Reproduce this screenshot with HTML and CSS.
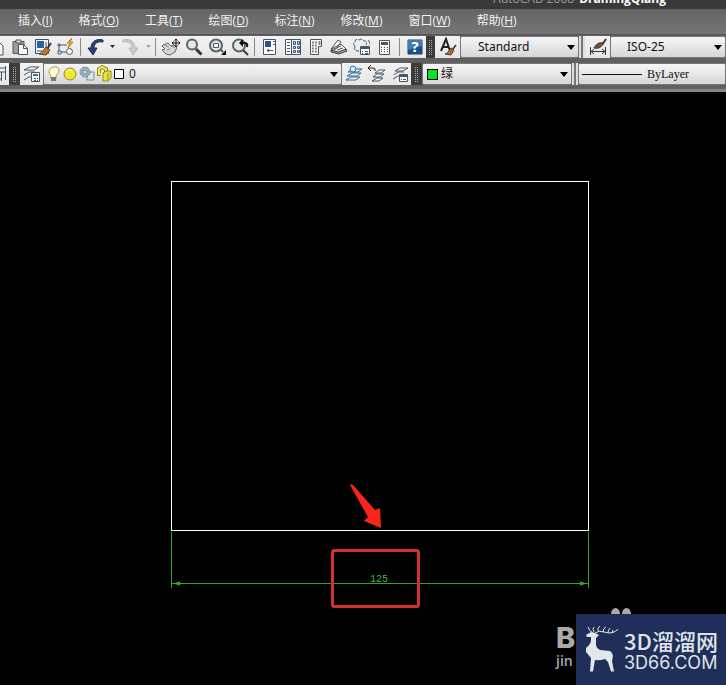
FILE: index.html
```html
<!DOCTYPE html>
<html lang="zh-CN">
<head>
<meta charset="utf-8">
<title>AutoCAD</title>
<link rel="stylesheet" href="styles.css">
</head>
<body>
<header class="titlebar"><span>AutoCAD 2008</span> <b>DramingQiang</b></header>
<nav class="menubar">
  <button>插入(<u>I</u>)</button>
  <button>格式(<u>O</u>)</button>
  <button>工具(<u>T</u>)</button>
  <button>绘图(<u>D</u>)</button>
  <button>标注(<u>N</u>)</button>
  <button>修改(<u>M</u>)</button>
  <button>窗口(<u>W</u>)</button>
  <button>帮助(<u>H</u>)</button>
</nav>

<div class="toolbars">
  <div class="row">
    <div class="tools tools-cut">
      <button aria-label="复制"><svg viewBox="0 0 20 20"><path class="pg" d="M7 5h5l4 4v9H7z"/></svg></button>
      <button aria-label="粘贴"><svg viewBox="0 0 20 20"><path d="M3 4.500h11v12H3z" fill="#9c9c98" stroke="#555"/><path d="M6 3h5v3H6z" fill="#ddd" stroke="#555"/><path class="pg" d="M8.500 7.500h5l4 4v6h-9z"/><path class="ln" d="M13.500 7.500v4h4"/></svg></button>
      <button aria-label="特性匹配"><svg viewBox="0 0 20 20"><path d="M2.500 2.500h13v14h-13z" fill="#f4f7fa" stroke="#345474"/><path d="M4 4h7v7H4z" fill="#2b6299"/><path d="M13 5v5M4 14h5" stroke="#345474"/><path d="M18 6l-4 6" stroke="#334" stroke-width="2"/><path d="M13 10l4 3-4 5-7-1c3-1 4-4 7-7z" fill="#b67837" stroke="#714316"/></svg></button>
      <button aria-label="块编辑器"><svg viewBox="0 0 20 20"><path class="ln" d="M3 15V8h8M5 15h7"/><path class="pg" d="M2 14h3v3H2zM2 7h2v2H2z"/><circle class="pg" cx="13.500" cy="14.500" r="3"/><path d="M16 1l-5 5h3l-2 5 5-6h-3z" fill="#ffc54a" stroke="#be7917"/></svg></button>
      <i class="sep"></i>
      <button aria-label="放弃"><svg viewBox="0 0 20 20"><path d="M17 3C10 1 5 5 5 11H2l5 7 4-7H8c0-4 3-7 9-6z" fill="#23456f" stroke="#142d50"/></svg></button>
      <button class="drop" aria-label="放弃列表"><svg viewBox="0 0 11 20"><path d="M3 8h5L5.500 11z" fill="#122c5c"/></svg></button>
      <button aria-label="重做"><svg viewBox="0 0 20 20"><path d="M3 3c7-2 12 2 12 8h3l-5 7-4-7h3c0-4-3-7-9-6z" fill="#ccc" stroke="#b5b5b5"/></svg></button>
      <button class="drop" aria-label="重做列表"><svg viewBox="0 0 11 20"><path d="M5 8h5L7.500 11z" fill="#aaa"/></svg></button>
      <i class="sep"></i>
      <button aria-label="平移"><svg viewBox="0 0 20 20"><path d="M2 8l5-2 3 3 3-1 3 2-2 5-5 3-4-1-4-4 3-1-3-3z" fill="#d8d8d6" stroke="#666"/><path d="M3 8l5 2M6 13l3-1M10 9l4 2" stroke="#888" fill="none"/><path d="M15 2v8M11 6h8M13.500 3.500L15 2l1.500 1.500M13.500 8.500L15 10l1.500-1.500M12.500 4.500L11 6l1.500 1.500M17.500 4.500L19 6l-1.500 1.500" stroke="#111" fill="none"/></svg></button>
      <button aria-label="实时缩放"><svg viewBox="0 0 20 20"><path d="M12 12l5.500 5.500" stroke="#30383c" stroke-width="3"/><circle class="lens" cx="8" cy="7.500" r="5"/></svg></button>
      <button aria-label="窗口缩放"><svg viewBox="0 0 20 20"><path d="M13 12l3 3" stroke="#555" stroke-width="2"/><circle class="lens" cx="9" cy="8.500" r="6"/><path class="pg" d="M6.500 6.500h5v4h-5z"/><path d="M19 13v5h-5z" fill="#111"/></svg></button>
      <button aria-label="缩放上一个"><svg viewBox="0 0 20 20"><path d="M13 13l5 5" stroke="#30383c" stroke-width="2"/><circle class="lens" cx="9" cy="8.500" r="6"/><path d="M11 6h4q3 0 2 4" fill="none" stroke="#111" stroke-width="2"/><path d="M13 2v8L9 6z" fill="#111"/></svg></button>
      <i class="sep"></i>
      <button aria-label="特性"><svg viewBox="0 0 20 20"><path class="pg" d="M3.500 2.500h12v15h-12z"/><path d="M5 4h6v6H5z" fill="#225588"/><path class="ln" d="M13 4.500h2M13 7.500h2M7 13.500h6M9 12l-2 1.500L9 15"/></svg></button>
      <button aria-label="设计中心"><svg viewBox="0 0 20 20"><path class="pg" d="M2.500 2.500h15v15h-15zM8.500 3v14"/><path d="M10.500 4.500h2v3h-2zM14.500 4.500h2v3h-2zM10.500 9.500h2v2h-2zM14.500 9.500h2v2h-2zM10.500 13.500h2v2h-2zM14.500 13.500h2v2h-2z" fill="#cbd7e2" stroke="#36577a"/><path class="ln" d="M4 5.500h3M4 8.500h3M4 11.500h3M4 14.500h3"/></svg></button>
      <button aria-label="工具选项板"><svg viewBox="0 0 20 20"><path class="pg" d="M4.500 2.500h11v7h-3v8h-8z"/><path d="M6 5.500h2m1 0h2M6 8.500h2m1 0h2M6 11.500h2m1 0h2M6 14.500h2m1 0h2M13.500 4v4" stroke="#888" stroke-width="2"/></svg></button>
      <button aria-label="图纸集"><svg viewBox="0 0 20 20"><path class="pg" d="M2 12l7-9 3 2-5 7zM2 12l10-5 6 6-9 3z"/><path d="M2 13l7 2 8-3 1 2-8 3-8-2z" fill="#999" stroke="#444"/><path class="ln" d="M5 12l7-3M8 13l6-2"/></svg></button>
      <button aria-label="标记集"><svg viewBox="0 0 20 20"><path class="ln" stroke-dasharray="4 1" d="M3 9q-3-2 0-4 0-4 4-2 3-2 5 1 4 0 2 4M3 9q-2 5 4 5M16 3q3 3 1 5"/><path class="pg" d="M8.500 9.500h9v8h-9z"/><path d="M9 10h8v2H9z" fill="#3a5874"/><path class="ln" d="M10 14.500h1m2 0h3M10 16.500h1m2 0h3"/></svg></button>
      <button aria-label="快速计算器"><svg viewBox="0 0 20 20"><path class="pg" d="M4.500 3.500h10v14h-10z"/><path d="M6 5h7v3H6z" fill="#555"/><path d="M6 10.500h7M6 12.500h7M6 14.500h7" stroke="#444" stroke-dasharray="1 2"/></svg></button>
      <i class="sep"></i>
      <button aria-label="帮助"><svg viewBox="0 0 20 20"><path d="M3 3h14v14H3z" fill="#1c5387" stroke="#164068"/><path d="M3 3h14v6L3 13z" fill="#437aa9"/><text x="10" y="15" class="help">?</text></svg></button>
    </div>
    <i class="grip"></i>
    <div class="tools">
      <button class="wide" aria-label="文字样式"><svg viewBox="0 0 20 20"><path d="M3 14L8 2l4 12M5 10h6" fill="none" stroke="#222" stroke-width="2"/><path d="M18 8l-4 5" stroke="#644125" stroke-width="2"/><path d="M13 11l3 2-3 5-6-1c3-1 4-3 6-6z" fill="#a47043" stroke="#62391b"/></svg></button>
    </div>
    <label class="combo combo-style"><select aria-label="文字样式名"><option>Standard</option></select></label>
    <i class="split"></i>
    <div class="tools">
      <button class="wide" aria-label="标注样式"><svg viewBox="0 0 20 20"><path d="M2.500 10v8M17.500 10v8M3 14.500h14M6 12l-3 2.500L6 17M14 12l3 2.500-3 2.500" fill="none" stroke="#333"/><path d="M18 2l-4 6" stroke="#4d3425" stroke-width="2"/><path d="M6 11c2-4 5-6 9-5-1 4-4 6-9 5z" fill="#75523a" stroke="#49301f"/></svg></button>
    </div>
    <label class="combo combo-fill combo-dim"><select aria-label="标注样式名"><option>ISO-25</option></select></label>
  </div>

  <div class="row">
    <div class="tools tools-edge">
      <button aria-label="标注更新"><svg viewBox="0 0 20 20"><path class="ln" d="M10 4h8M17.500 2v14M12 8h6M13.500 8v9M10 15h4"/></svg></button>
    </div>
    <i class="grip grip-wide"></i>
    <div class="tools">
      <button aria-label="图层特性管理器"><svg viewBox="0 0 20 20"><path class="pg" d="M2 6l6-3h9l-5 3zM2 11l5-3h6M2 16l5-3h3"/><path class="pg" d="M9.500 8.500h8v9h-8z"/><path d="M11 10h5v2h-5z" fill="#3b7199"/><path d="M12 14.500h4M12 16.500h4" stroke="#255a85" stroke-dasharray="2 1"/></svg></button>
    </div>
    <label class="combo combo-layer">
      <svg class="states" viewBox="0 0 80 20" aria-hidden="true">
        <path d="M6 12q-4-5 0-8 5-3 8 1 1 3-3 7v3H6z" fill="#fffbd2" stroke="#a69a5b"/><path d="M6 13h5v4H6z" fill="#777"/>
        <circle cx="25" cy="10" r="6" fill="#eee733" stroke="#8c891e"/><path d="M21 8q2-3 6-2" stroke="#fffcc0" fill="none"/>
        <path d="M42 8h7v8h-7z" fill="#dce5ea" stroke="#758f9c"/><circle cx="40" cy="8" r="5" fill="#9ab5c2" stroke="#6b8795" stroke-dasharray="3 1"/><circle cx="40" cy="8" r="2" fill="#dde7eb" stroke="#6b8795"/>
        <path d="M56 10H54V5l3-2 4 2v5" fill="none" stroke="#938d17" stroke-width="4"/><path d="M56 10H54V5l3-2 4 2v5" fill="none" stroke="#eee957" stroke-width="2"/><path d="M58 9l3-2h5v7l-3 3h-5z" fill="#ece632" stroke="#8d881a"/><path d="M63 9v7" stroke="#8d881a"/>
        <path d="M69.500 5.500h9v9h-9z" fill="#fff" stroke="#000"/>
      </svg>
      <select aria-label="图层"><option>0</option></select>
    </label>
    <div class="tools">
      <button aria-label="将对象的图层置为当前"><svg viewBox="0 0 20 20"><path d="M2 16l5-3h9l-4 3zM3 12l5-3h9l-4 3zM4 8l5-3h9l-4 3z" fill="#edf7fc" stroke="#326589"/><circle cx="9" cy="5" r="3" fill="#c9edf5" stroke="#347199"/></svg></button>
      <button aria-label="上一个图层"><svg viewBox="0 0 20 20"><path class="pg" d="M5 17l5-3h6l-4 3zM6 13l4-3h7l-4 3zM8 9l4-3h6l-4 3z"/><path d="M1 4h5q3 0 2 3M4 1L1 4l3 3" fill="none" stroke="#222"/></svg></button>
      <button aria-label="图层状态管理器"><svg viewBox="0 0 20 20"><path class="pg" d="M3 15l5-3h4M4 11l4-3h6M5 7l5-3h8l-5 3zM9.500 10.500h8v7h-8z"/><path d="M10 11h7v2h-7z" fill="#3a5874"/><path class="ln" d="M11 15.500h1m1 0h3"/></svg></button>
    </div>
    <i class="grip grip-wide"></i>
    <label class="combo combo-color"><i class="swatch"></i><select aria-label="颜色"><option>绿</option></select></label>
    <i class="split"></i>
    <label class="combo combo-fill combo-line"><i class="stroke"></i><select aria-label="线型"><option>ByLayer</option></select></label>
  </div>
</div>

<main class="canvas">
  <svg class="drawing" viewBox="0 0 726 590" role="img" aria-label="矩形与尺寸标注">
    <rect x="171.500" y="89.500" width="417" height="349" fill="none" stroke="#fff"/>
    <g stroke="#31a331" fill="#31b331">
      <path d="M171.500 440v56M588.500 440v56M172 491.500h416"/>
      <path d="M173 491.500l7-2v4zM587 491.500l-7-2v4z" stroke="none"/>
    </g>
    <text x="379" y="490" class="dim">125</text>
    <path d="M350 393q1-2 4 1l21 24 5-2 1 20-17-7 4-4z" fill="#fb2419"/>
    <rect x="332.500" y="458.500" width="86" height="56" rx="2" fill="none" stroke="#d3312c" stroke-width="3"/>
  </svg>
  <div class="source"><i class="paw"></i><i class="paw"></i><b>B</b><span>jin</span></div>
  <div class="brand">
    <svg class="deer" viewBox="0 0 36 48" aria-hidden="true">
      <path d="M1 9l5-3 4 1 4 2-3 3v4q-1 5 4 8l10 1q3 2 3 5l-1 5 2 10.500h-3L23 36l-3-3q-6 2-10 1L8 45.500H5L6 32 1 26v-4q5-4 5-8V11L2 11z" fill="#e4e6ea"/>
      <path d="M8 7Q4 5 3 1M9 6Q7 3 9 1M10 7q4-3 9-1 9 3 14-3M13 5q-1-3 2-5M18 6q0-4 3-5M23 7q0-3 2-5M27 7l1-3" fill="none" stroke="#e4e6ea"/>
    </svg>
    <div class="names"><strong>3D溜溜网</strong><span>3D66.COM</span></div>
  </div>
</main>
</body>
</html>
```
FILE: styles.css
```css
* { box-sizing: border-box; }
body {
  margin: 0;
  min-height: 100vh;
  display: flex;
  flex-direction: column;
  overflow-x: hidden;
  background: #000;
  font: 12px/16px "Open Sans", "Noto Sans CJK SC", sans-serif;
}
button, select { font: inherit; color: inherit; border: 0; background: none; padding: 0; }
svg { display: block; }

.titlebar {
  display: flex;
  align-items: flex-end;
  justify-content: flex-end;
  gap: 5px;
  height: 9px;
  padding: 0 60px 2px 0;
  overflow: hidden;
  background: #393939;
  color: #999;
  font-size: 12px;
  line-height: 16px;
}
.titlebar b { color: #fff; }

.menubar {
  display: flex;
  gap: 2px;
  height: 26px;
  padding: 0 6px 2px;
  background: linear-gradient(#646464, #767676);
  border-bottom: 1px solid #555;
  color: #f2f2f2;
}
.menubar button { padding: 0 12px; white-space: nowrap; }

.toolbars {
  display: flex;
  flex-direction: column;
  gap: 5px;
  padding: 1px 0 4px;
  background: #606060;
  border-bottom: 3px solid #858585;
}
.row { display: flex; height: 22px; }
.tools {
  display: flex;
  flex: none;
  align-items: center;
  background: linear-gradient(#f2f2f2, #e6e6e6);
}
.tools-cut { margin-left: -15px; }
.tools-edge { width: 9px; justify-content: flex-end; overflow: hidden; }
.tools button { flex: none; width: 23px; height: 22px; display: grid; place-items: center; }
.tools .drop { width: 11px; }
.tools .wide { width: 25px; }
.tools svg { height: 20px; }
.pg { fill: #f8fafb; stroke: #465564; }
.ln { fill: none; stroke: #465564; }
.lens { fill: #dfe7ea; stroke: #59656b; stroke-width: 2; }
.help { fill: #fff; font: bold 15px "Open Sans", sans-serif; text-anchor: middle; }
.sep { width: 7px; height: 18px; border-left: 3px solid transparent; background: linear-gradient(90deg, #888 1px, transparent 1px); background-clip: padding-box; }

.grip {
  flex: none;
  width: 9px;
  border: solid #3c3c3c;
  border-width: 3px 2px;
  background: repeating-linear-gradient(#3c3c3c 0 1px, transparent 1px 2px), repeating-linear-gradient(90deg, #3c3c3c 0 1px, #aaa 1px 2px);
}
.grip-wide { width: 11px; border-width: 3px; }
.split { flex: none; width: 6px; border: solid #ddd; border-width: 0 2px; background: #777; }

.combo {
  display: flex;
  flex: none;
  align-items: center;
  border: 1px solid #777;
  border-radius: 2px;
  background: linear-gradient(#f6f6f6, #d6d6d6);
  color: #111;
}
.combo::after {
  content: "";
  flex: none;
  margin-right: 3px;
  border: solid transparent;
  border-width: 5px 4px 0;
  border-top-color: #000;
}
.combo select { flex: 1; min-width: 0; appearance: none; outline: 0; }
.combo-style { width: 119px; }
.combo-style select, .combo-dim select { padding-left: 17px; font-family: "Noto Sans", sans-serif; }
.combo-dim select { padding-left: 16px; }
.combo-layer { width: 299px; }
.combo-layer select { padding-left: 4px; }
.states { width: 80px; height: 20px; margin-left: 1px; }
.combo-color { width: 150px; }
.combo-color select { padding-left: 3px; }
.swatch { width: 11px; height: 11px; margin-left: 4px; border: 1px solid #000; background: #00e620; }
.combo-fill { flex: 1; min-width: 0; }
.combo-line::after { display: none; }
.combo-line select { padding-left: 5px; font-family: "Liberation Serif", serif; }
.stroke { width: 60px; margin-left: 3px; border-top: 1px solid #111; }

.canvas { position: relative; flex: 1; overflow: hidden; }
.drawing { width: 100%; }
.dim { fill: #43b943; font: 10px "Liberation Mono", monospace; text-anchor: middle; }

.source {
  position: absolute;
  right: 84px;
  bottom: 16px;
  width: 86px;
  color: #aaa;
  font: 600 14px/16px "Open Sans", sans-serif;
}
.source b { display: block; font: 800 29px/30px "Inter", sans-serif; }
.paw { position: absolute; top: -15px; left: 55px; width: 9px; height: 12px; border-radius: 50%; background: #aaa; }
.paw + .paw { left: 66px; }

.brand {
  position: absolute;
  right: 0;
  bottom: 0;
  display: flex;
  align-items: center;
  gap: 3px;
  width: 150px;
  height: 71px;
  padding-left: 9px;
  background: #1f2f59;
  color: #dfe2e8;
}
.deer { flex: none; width: 36px; height: 48px; }
.names { display: grid; white-space: nowrap; }
.names strong { font: 500 22px/26px "Noto Sans CJK SC", sans-serif; }
.names span { font: 18px/20px "Inter", sans-serif; }
```
